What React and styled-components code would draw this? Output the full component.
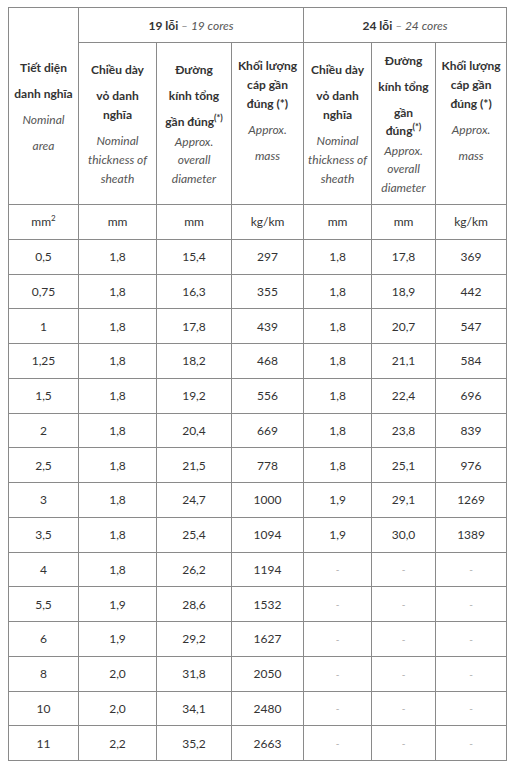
import React from 'react';
import styled, { createGlobalStyle } from 'styled-components';

const GlobalStyle = createGlobalStyle`
  body {
    margin: 0;
    background: #fff;
    font-family: Lato, "Open Sans", "Liberation Sans", sans-serif;
    color: #333;
  }
`;

const Wrapper = styled.div`
  padding: 7px 10px 0 8px;
`;

const Table = styled.table`
  border-collapse: collapse;
  table-layout: fixed;
  width: 498px;
  font-size: 12px;

  td, th {
    border: 1px solid #8a8a8a;
    text-align: center;
    padding: 0;
  }
`;

const GroupHead = styled.th`
  height: 34px;
  font-weight: 700;
  vertical-align: middle;
`;

const HeadCell = styled.th`
  height: ${p => p.$h || 161}px;
  vertical-align: top;
  font-weight: 400;
`;

const Line = styled.span`
  display: block;
  line-height: 18px;
  margin-top: ${p => p.$mt}px;
  font-weight: ${p => (p.$it ? 400 : 700)};
  font-style: ${p => (p.$it ? 'italic' : 'normal')};
  color: ${p => (p.$it ? '#555' : '#333')};
  white-space: nowrap;
`;

const Sup = styled.sup`
  font-size: ${p => (p.$bold ? '9px' : '8px')};
  font-weight: ${p => (p.$bold ? 700 : 400)};
  line-height: 0;
  vertical-align: 5px;
`;

const Cores = styled.span`
  font-style: italic;
  font-weight: 400;
  color: #555;
`;

const Row = styled.tr`
  height: 34.75px;
`;

const Cell = styled.td`
  vertical-align: middle;
  color: ${p => (p.$empty ? '#aaa' : '#333')};
  font-size: ${p => (p.$empty ? '10px' : '12px')};
`;

// gap = distance from the previous line's centre; third flag = italic, fourth = (*) mark
const heads = [
  { top: 51, lines: [['Tiết diện'], ['danh nghĩa', 26], ['Nominal', 26, 1], ['area', 26, 1]] },
  { top: 18, lines: [['Chiều dày'], ['vỏ danh', 26], ['nghĩa', 19], ['Nominal', 26, 1], ['thickness of', 19, 1], ['sheath', 19, 1]] },
  { top: 18, lines: [['Đường'], ['kính tổng', 26], ['gần đúng', 26, 0, true], ['Approx.', 20, 1], ['overall', 18, 1], ['diameter', 19, 1]] },
  { top: 14, lines: [['Khối lượng'], ['cáp gần', 19], ['đúng (*)', 19], ['Approx.', 26, 1], ['mass', 26, 1]] },
  { top: 18, lines: [['Chiều dày'], ['vỏ danh', 26], ['nghĩa', 19], ['Nominal', 26, 1], ['thickness of', 19, 1], ['sheath', 19, 1]] },
  { top: 9, lines: [['Đường'], ['kính tổng', 26], ['gần', 26], ['đúng', 18, 0, true], ['Approx.', 20, 1], ['overall', 18, 1], ['diameter', 19, 1]] },
  { top: 14, lines: [['Khối lượng'], ['cáp gần', 19], ['đúng (*)', 19], ['Approx.', 26, 1], ['mass', 26, 1]] },
];

const data = [
  ['0,5', '1,8', '15,4', '297', '1,8', '17,8', '369'],
  ['0,75', '1,8', '16,3', '355', '1,8', '18,9', '442'],
  ['1', '1,8', '17,8', '439', '1,8', '20,7', '547'],
  ['1,25', '1,8', '18,2', '468', '1,8', '21,1', '584'],
  ['1,5', '1,8', '19,2', '556', '1,8', '22,4', '696'],
  ['2', '1,8', '20,4', '669', '1,8', '23,8', '839'],
  ['2,5', '1,8', '21,5', '778', '1,8', '25,1', '976'],
  ['3', '1,8', '24,7', '1000', '1,9', '29,1', '1269'],
  ['3,5', '1,8', '25,4', '1094', '1,9', '30,0', '1389'],
  ['4', '1,8', '26,2', '1194', '-', '-', '-'],
  ['5,5', '1,9', '28,6', '1532', '-', '-', '-'],
  ['6', '1,9', '29,2', '1627', '-', '-', '-'],
  ['8', '2,0', '31,8', '2050', '-', '-', '-'],
  ['10', '2,0', '34,1', '2480', '-', '-', '-'],
  ['11', '2,2', '35,2', '2663', '-', '-', '-'],
];

const units = ['mm', 'mm', 'kg/km', 'mm', 'mm', 'kg/km'];

const widths = [70, 78, 75, 72, 68, 64, 71];

const HeadLines = ({ head }) => (
  <>
    {head.lines.map(([text, gap, it, star], i) => (
      <Line key={i} $mt={i === 0 ? head.top : gap - 18} $it={!!it}>
        {text}
        {star && <Sup $bold>(*)</Sup>}
      </Line>
    ))}
  </>
);

export default function App() {
  return (
    <Wrapper>
      <GlobalStyle />
      <Table>
        <colgroup>
          {widths.map((w, i) => (
            <col key={i} style={{ width: w }} />
          ))}
        </colgroup>
        <thead>
          <tr>
            <HeadCell rowSpan={2} $h={34}>
              <HeadLines head={heads[0]} />
            </HeadCell>
            <GroupHead colSpan={3}>
              19 lỗi <Cores>– 19 cores</Cores>
            </GroupHead>
            <GroupHead colSpan={3}>
              24 lỗi <Cores>– 24 cores</Cores>
            </GroupHead>
          </tr>
          <tr>
            {heads.slice(1).map((h, i) => (
              <HeadCell key={i}>
                <HeadLines head={h} />
              </HeadCell>
            ))}
          </tr>
        </thead>
        <tbody>
          <Row>
            <Cell>
              mm<Sup>2</Sup>
            </Cell>
            {units.map((u, i) => (
              <Cell key={i}>{u}</Cell>
            ))}
          </Row>
          {data.map((r, i) => (
            <Row key={i}>
              {r.map((v, j) => (
                <Cell key={j} $empty={v === '-'}>
                  {v}
                </Cell>
              ))}
            </Row>
          ))}
        </tbody>
      </Table>
    </Wrapper>
  );
}
